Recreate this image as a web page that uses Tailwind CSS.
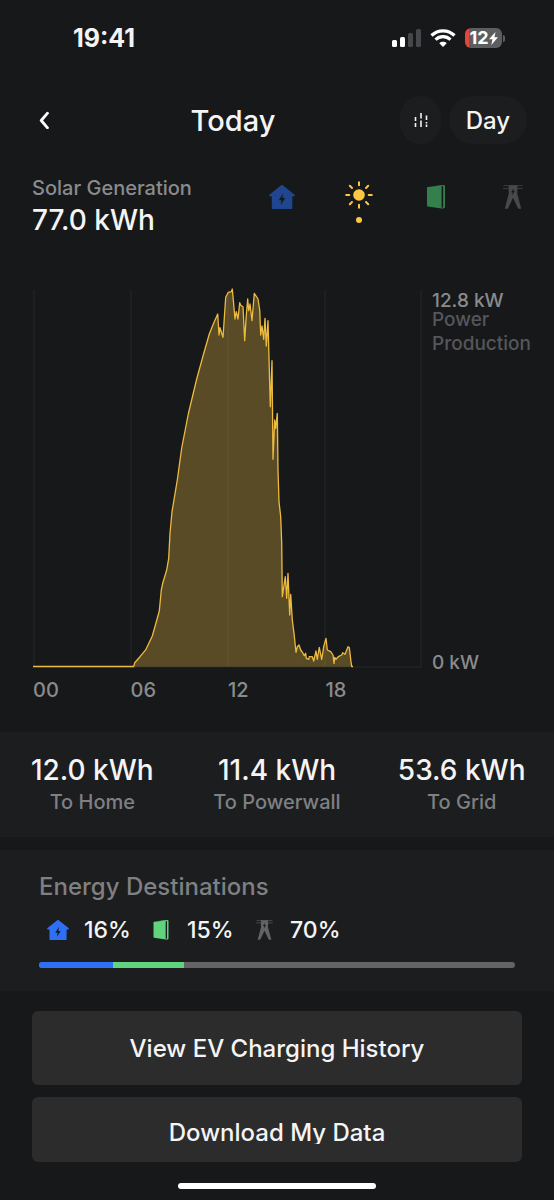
<!DOCTYPE html>
<html lang="en">
<head>
<meta charset="utf-8">
<meta name="viewport" content="width=device-width, initial-scale=1">
<title>Solar Generation</title>
<script src="https://cdn.jsdelivr.net/npm/@tailwindcss/browser@4"></script>
</head>
<body class="min-h-screen bg-[#17181a] font-['Inter',sans-serif] font-medium text-[#f4f4f5]">
<svg class="hidden" aria-hidden="true">
  <symbol id="home" viewBox="0 0 26 24"><path fill="currentColor" fill-rule="evenodd" d="M12.1.3a1.5 1.5 0 0 1 1.8 0L25.6 9.700c.7.6.4 1.600-.5 1.600H23.300V23.500c0 .3-.2.5-.5.5H3.300c-.3 0-.5-.2-.5-.5V11.300H.9c-.9 0-1.200-1-.5-1.600zM14.100 8.500 9.700 15.300h2.800l-.8 4.700 4.600-6.900h-2.900z"/></symbol>
  <symbol id="powerwall" viewBox="0 0 18 24"><path fill="currentColor" d="M.8 2 14.600.6V23.400L.8 21.400Q0 21.200 0 20.500V2.900Q0 2.100.8 2z"/><path fill="currentColor" d="M3 1.500 16.400 0Q18 0 18 1.200V22.100Q18 23.100 16.500 23.400L14.200 23.600 15.700 22.400Q16.200 22 16.200 21.300V2Q16.200 1.100 15.200 1.100z"/></symbol>
  <symbol id="grid" viewBox="0 0 20 24"><path stroke="currentColor" stroke-width=".9" stroke-opacity=".8" fill="none" d="M.5.700H19.500M0 3.500H6M14 3.500H20"/><path fill="currentColor" fill-rule="evenodd" d="M5.600.2H14.400L14.200 8.600 18.200 23.800H15.200L10 12.800 4.800 23.800H1.800L5.800 8.600zM10.700 3.300 8.100 7.300H9.700L9.200 10.200 11.900 6H10.200z"/></symbol>
</svg>
<div class="flex min-h-screen flex-col">

  <div class="flex h-[76px] items-center justify-between pr-[49px] pl-[73px]">
    <span class="text-[25px] leading-7 font-bold">19:41</span>
    <div class="flex items-center gap-[9px]">
      <svg class="h-[18px] w-[29px]" viewBox="0 0 29 18" aria-label="Signal"><rect y="11" width="5" height="7" rx="1.500" fill="#fff"/><rect x="8" y="8" width="5" height="10" rx="1.500" fill="#fff"/><rect x="16" y="4" width="5" height="14" rx="1.500" fill="#46474a"/><rect x="24" y="0" width="5" height="18" rx="1.500" fill="#46474a"/></svg>
      <svg class="h-[18px] w-[26px]" viewBox="0 0 26 18" fill="none" stroke="#fff" aria-label="Wi-Fi"><path stroke-width="3.300" d="M1.500 6.500C8 .2 18 .2 24.500 6.500"/><path stroke-width="3.200" d="M5.500 10.700c4.300-4 10.700-4 15 0"/><path fill="#fff" stroke="none" d="M13 18 9.300 14.200c2-1.900 5.400-1.900 7.400 0z"/></svg>
      <div class="flex items-center gap-px">
        <div class="flex h-5 w-[37px] items-center justify-center overflow-hidden rounded-[6px] bg-linear-to-r from-[#e5453b] from-12% to-[#5d5e60] to-12% text-[18px] leading-5 font-bold text-white">
          <span>12</span>
          <svg class="h-[13px] w-[9px]" viewBox="0 0 9 13" fill="#fff"><path d="M6.500 0 0 7.300h3.500L2.300 13 9 5.300H5.400z"/></svg>
        </div>
        <div class="h-[7px] w-[2px] rounded-r-full bg-[#5d5e60]"></div>
      </div>
    </div>
  </div>

  <header class="mt-5 flex h-12 items-center justify-between pr-[27px] pl-[32px]">
    <button class="flex h-10 w-6 items-center justify-center" aria-label="Back">
      <svg class="h-[18px] w-3" viewBox="0 0 12 18" fill="none" stroke="#fff" stroke-width="2.800" stroke-linecap="round" stroke-linejoin="round"><path d="M9.500 2.200 3.200 9.500l6.300 7.300"/></svg>
    </button>
    <h1 class="pt-[2px] pl-[10px] text-[29px] leading-9">Today</h1>
    <div class="flex justify-end gap-2">
      <button class="flex h-12 w-[41px] items-center justify-center rounded-full bg-[#1c1d1f]" aria-label="Compare">
        <svg class="h-4 w-[14px]" viewBox="0 0 14 16" stroke="#f4f4f5" stroke-width="1.600" fill="none"><path d="M1.500 5v4M1.500 11v4M7 1v5.500M7 8.500V15M12.500 3.500V8M12.500 10v1.500M12.500 12.500V15"/></svg>
      </button>
      <button class="h-12 w-[78px] rounded-full bg-[#1c1d1f] pt-[2px] text-[24px] leading-8">Day</button>
    </div>
  </header>

  <section class="mt-8 flex h-14 items-start justify-between pr-[3px] pl-[32px]">
    <div>
      <h2 class="text-[20px] leading-6 text-[#8a8b8d]">Solar Generation</h2>
      <p class="mt-[2px] text-[28px] leading-9">77.0 kWh</p>
    </div>
    <nav class="flex">
      <button class="flex h-[50px] w-[77px] flex-col items-center" aria-label="Home"><svg class="mt-[9px] h-6 w-[26px] text-[#20468f]"><use href="#home"/></svg></button>
      <button class="flex h-[50px] w-[77px] flex-col items-center gap-2" aria-label="Solar">
        <svg class="mt-[5px] h-[28px] w-[28px]" viewBox="-14 -14 28 28" stroke="#fdc743" stroke-width="2" stroke-linecap="round"><circle r="5.800" fill="#fdc743" stroke="none"/><path d="M0-9.700V-12.800M0 9.700V12.800M-9.700 0H-12.800M9.700 0H12.800M-7-7-9.200-9.200M7-7 9.200-9.200M-7 7-9.200 9.200M7 7 9.200 9.200"/></svg>
        <span class="size-[6px] shrink-0 rounded-full bg-[#fdc743]"></span>
      </button>
      <button class="flex h-[50px] w-[77px] flex-col items-center" aria-label="Powerwall"><svg class="mt-[9px] h-6 w-[18px] text-[#357f4d]"><use href="#powerwall"/></svg></button>
      <button class="flex h-[50px] w-[77px] flex-col items-center" aria-label="Grid"><svg class="mt-[9px] h-6 w-5 text-[#48494a]"><use href="#grid"/></svg></button>
    </nav>
  </section>

  <section class="mt-14 flex h-[380px] gap-[9px] pl-[33px]">
    <svg class="h-full min-w-0 flex-1" viewBox="33 288 390 380" preserveAspectRatio="none" role="img" aria-label="Power production over the day">
      <path stroke="#1e1f21" stroke-width="2" d="M34 290V667M131 290V667M228 290V667M325 290V667M421 290V667M34 667H422"/>
      <path fill="#fdc743" fill-opacity=".29" stroke="none" d="M133.700 666.700 134.700 662.700 140 656.700 146 649.300 152.300 636 155.700 624 159.300 611 161.300 590 162.700 583.300 166.700 570 168.700 558.300 170 533.300 172 511.700 177.300 480 181.700 448 188.300 414 196.700 379 203.300 355 209.300 334 213.300 324 217.700 314 219 335 220 327.700 223 337.300 225.700 297.300 228.300 292.300 231.300 291.700 232.300 289 233.300 300 235 319 236.300 311.700 238 319 239.700 302.700 240.700 305.300 243 306.700 244.700 340.700 246.300 315 247.700 299 248.700 310.700 250 304 252 320.700 254.300 293.300 258 299 259.700 310 260.700 335 262 326 263.700 339.300 265 318.300 266.300 346 268 320.700 270.300 406.700 272 360.700 273 459.300 274.700 420 275.700 428.300 277.300 413.300 278 470 279 501.700 280.700 516.700 281.700 543.300 282.300 596.700 285.300 576.700 286.700 598.300 288 573.300 289.700 615 290.700 594.300 292.300 620 294 633.300 296 652.300 297.300 646.700 299 645 300.700 650 302.700 652.700 304.300 655.700 305.700 653.300 306.300 658.300 308.700 659.300 309.300 656.700 312.300 656.700 313.700 661 316 651 317.300 659.300 319.300 647.300 321.700 659.300 323.700 646.700 326 638.300 327.300 650 330.700 651.700 333 655 334 663.300 334.700 657.300 336 659.300 338.300 656.700 341.700 655 342.700 652.700 345 654.300 348 646.700 349.300 647.700 351 661.700 351.700 666.700z"/>
      <path fill="none" stroke="#edbb40" stroke-width="1.300" stroke-linejoin="round" d="M33 666.500 133.700 666.500 134.700 662.700 140 656.700 146 649.300 152.300 636 155.700 624 159.300 611 161.300 590 162.700 583.300 166.700 570 168.700 558.300 170 533.300 172 511.700 177.300 480 181.700 448 188.300 414 196.700 379 203.300 355 209.300 334 213.300 324 217.700 314 219 335 220 327.700 223 337.300 225.700 297.300 228.300 292.300 231.300 291.700 232.300 289 233.300 300 235 319 236.300 311.700 238 319 239.700 302.700 240.700 305.300 243 306.700 244.700 340.700 246.300 315 247.700 299 248.700 310.700 250 304 252 320.700 254.300 293.300 258 299 259.700 310 260.700 335 262 326 263.700 339.300 265 318.300 266.300 346 268 320.700 270.300 406.700 272 360.700 273 459.300 274.700 420 275.700 428.300 277.300 413.300 278 470 279 501.700 280.700 516.700 281.700 543.300 282.300 596.700 285.300 576.700 286.700 598.300 288 573.300 289.700 615 290.700 594.300 292.300 620 294 633.300 296 652.300 297.300 646.700 299 645 300.700 650 302.700 652.700 304.300 655.700 305.700 653.300 306.300 658.300 308.700 659.300 309.300 656.700 312.300 656.700 313.700 661 316 651 317.300 659.300 319.300 647.300 321.700 659.300 323.700 646.700 326 638.300 327.300 650 330.700 651.700 333 655 334 663.300 334.700 657.300 336 659.300 338.300 656.700 341.700 655 342.700 652.700 345 654.300 348 646.700 349.300 647.700 351 661.700 351.700 666.500H353"/>
    </svg>
    <div class="flex w-[122px] flex-col justify-between text-[19px] text-[#8a8b8d]">
      <div class="pt-[6px]">
        <p class="leading-[14px]">12.8 kW</p>
        <p class="leading-6 text-[#55565a]">Power<br>Production</p>
      </div>
      <p class="leading-[10px]">0 kW</p>
    </div>
  </section>

  <div class="mt-[10px] flex h-6 pr-[131px] pl-[33px] text-[20px] leading-6 text-[#8a8b8d]">
    <span class="flex-1">00</span><span class="flex-1">06</span><span class="flex-1">12</span><span class="flex-1">18</span>
  </div>

  <section class="mt-[30px] grid h-[105px] grid-cols-3 bg-[#1c1d1f] pt-5 text-center">
    <div><p class="text-[28px] leading-9">12.0 kWh</p><p class="text-[20px] leading-7 text-[#7f8082]">To Home</p></div>
    <div><p class="text-[28px] leading-9">11.4 kWh</p><p class="text-[20px] leading-7 text-[#7f8082]">To Powerwall</p></div>
    <div><p class="text-[28px] leading-9">53.6 kWh</p><p class="text-[20px] leading-7 text-[#7f8082]">To Grid</p></div>
  </section>

  <section class="mt-[13px] h-[141px] bg-[#1c1d1f] px-[39px] pt-[21px]">
    <h2 class="text-[24px] leading-8 text-[#7f8082]">Energy Destinations</h2>
    <div class="mt-[11px] flex pl-[5px] text-[23px] leading-8">
      <div class="flex w-[103px] items-center gap-3"><span class="flex w-7 justify-center"><svg class="h-5 w-[22px] text-[#2f6ff5]"><use href="#home"/></svg></span>16%</div>
      <div class="flex w-[103px] items-center gap-3"><span class="flex w-7 justify-center"><svg class="h-5 w-4 text-[#61d27e]"><use href="#powerwall"/></svg></span>15%</div>
      <div class="flex w-[103px] items-center gap-3"><span class="flex w-7 justify-center"><svg class="h-5 w-[17px] text-[#626365]"><use href="#grid"/></svg></span>70%</div>
    </div>
    <div class="mt-4 flex h-[6px] overflow-hidden rounded-full bg-[#646465]">
      <div class="bg-[#2f6ff5]" style="width:15.6%"></div>
      <div class="bg-[#61d27e]" style="width:14.8%"></div>
    </div>
  </section>

  <div class="mt-5 flex flex-col gap-3 px-8 text-[24px]">
    <button class="h-[74px] rounded-md bg-[#2c2c2d] pt-[2px] leading-8">View EV Charging History</button>
    <button class="flex h-[65px] items-center justify-center rounded-md bg-[#2c2c2d] pt-[6px]"><span class="block overflow-hidden leading-[22px]">Download My Data</span></button>
  </div>
  <div class="mx-auto mt-[21px] h-[6px] w-[198px] rounded-full bg-white"></div>
</div>
</body>
</html>
